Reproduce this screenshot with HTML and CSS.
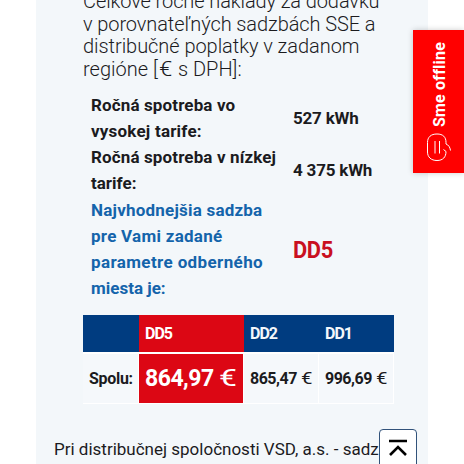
FILE: index.html
```html
<!DOCTYPE html>
<html lang="sk">
<head>
<meta charset="utf-8">
<title>Kalkulačka</title>
<link rel="stylesheet" href="styles.css">
</head>
<body>
<main class="panel">
  <p class="intro"><span class="i1">Celkové ročné náklady za dodávku</span><span class="i2">v porovnateľných sadzbách SSE a</span><span class="i3">distribučné poplatky v zadanom</span><span class="i4">regióne [<i>€</i> s DPH]:</span></p>
  <dl class="summary">
    <dt><span class="s1">Ročná spotreba vo</span><span class="s2">vysokej tarife:</span></dt>
    <dd class="value">527 kWh</dd>
    <dt><span class="s1">Ročná spotreba v nízkej</span><span>tarife:</span></dt>
    <dd class="value">4 375 kWh</dd>
    <dt class="blue"><span class="s2">Najvhodnejšia sadzba</span><span class="s5">pre Vami zadané</span><span class="s7">parametre odberného</span><span>miesta je:</span></dt>
    <dd class="best">DD5</dd>
  </dl>
  <div class="rates">
    <div class="head"></div><div class="head red">DD5</div><div class="head">DD2</div><div class="head">DD1</div>
    <div class="cell label">Spolu:</div><div class="cell red total"><span>864,97</span><i>€</i></div><div class="cell"><span>865,47</span><i>€</i></div><div class="cell"><span>996,69</span><i>€</i></div>
  </div>
  <p class="note">Pri distribučnej spoločnosti VSD, a.s. - sadzba</p>
</main>
<aside class="chat">
  <svg width="26" height="29" viewBox="0 0 26 29"><path d="M20 18.5C20 24 17 27.5 11 27.5C5 27.5 1.500 24 1.500 19V9.500C1.500 4 5 1 11 1C17 1 20 4 20 9.500V11C22.500 12 24 14 24.500 17.500M20 18.500L17.500 16.500M9 8V20.500M13.500 8V20.500"/></svg>
  <span>Sme offline</span>
</aside>
<button class="top" aria-label="Hore"><svg width="20" height="18" viewBox="0 0 20 18"><path d="M1 2H19M2 16L10 8L18 16"/></svg></button>
</body>
</html>
```
FILE: styles.css
```css
* { box-sizing: border-box; }
body { margin: 0; height: 464px; overflow: hidden; background: #fff; color: #1b1b1e; font-family: Roboto, "Liberation Sans", sans-serif; }
p, dl, dd { margin: 0; }
i { font-style: normal; }
.panel { width: 392px; height: 464px; margin-left: 36px; background: #f3f7fa; overflow: hidden; }
.intro { margin: -10px 0 0 47px; font-size: 20px; font-weight: 300; line-height: 22.7px; letter-spacing: -.1px; }
.intro span, dt span { display: block; white-space: nowrap; }
.intro .i3 { letter-spacing: -.05px; }
.intro .i4 { letter-spacing: .02px; }
.intro i { display: inline-block; transform: scaleX(1.2); margin: 0 2px; }
.summary { display: grid; grid-template-columns: 202px 130px; grid-template-rows: 52px 53px 104px; margin: 11px 0 0 55px; font-size: 17px; font-weight: 700; line-height: 26px; }
.summary dd { align-self: center; white-space: nowrap; }
.s1 { letter-spacing: .13px; }
.s2 { letter-spacing: .21px; }
.s5 { letter-spacing: .27px; }
.s7 { letter-spacing: .38px; }
.value { letter-spacing: -.2px; }
.blue { color: #1464ab; }
.summary .best { padding-top: 2px; color: #c9101f; font-size: 24px; letter-spacing: -.4px; transform: scaleX(.91); transform-origin: left; }
.rates { display: grid; grid-template-columns: 56px 105px 75px 75px; grid-template-rows: 38px 51px; width: 311px; margin: 14px 0 0 47px; font-size: 16px; font-weight: 700; letter-spacing: -.5px; }
.rates > div { display: flex; align-items: center; padding-left: 6px; white-space: nowrap; }
.rates .head { background: #003c80; color: #f3f7fb; border-bottom: 1px solid #fff; letter-spacing: -1px; }
.rates .cell { border: 1px solid #fff; border-left: 0; background: #f5f8fb; }
.rates .label { letter-spacing: -.3px; }
.rates .red { background: #dc0714; color: #fff; }
.rates .total { font-size: 23px; }
.rates i { font-weight: 400; margin-left: 4px; transform: scaleX(1.28); transform-origin: left; }
.rates .total i { font-weight: 400; margin-left: 5px; font-size: 24px; transform: scaleX(1.33); }
.note { margin: 34px 0 0 18px; font-size: 17px; line-height: 22px; white-space: nowrap; }
.chat { position: absolute; left: 413px; top: 30px; width: 51px; height: 143px; background: #f00; color: #fff; box-shadow: 0 0 6px rgba(0, 0, 0, .2); display: flex; flex-direction: column-reverse; align-items: center; padding-bottom: 11px; gap: 6px; }
.chat svg { fill: none; stroke: #fff; stroke-width: 1; }
.chat span { writing-mode: vertical-rl; transform: rotate(180deg); margin-left: 2px; font-size: 16px; font-weight: 700; line-height: 20px; letter-spacing: .2px; white-space: nowrap; }
.top { position: absolute; left: 379px; top: 429px; width: 38px; height: 42px; padding: 9px 0 0; border: 1px solid #31527a; border-radius: 4px; background: #fff; display: flex; align-items: flex-start; justify-content: center; }
.top svg { fill: none; stroke: #000; stroke-width: 2.6; }
```
